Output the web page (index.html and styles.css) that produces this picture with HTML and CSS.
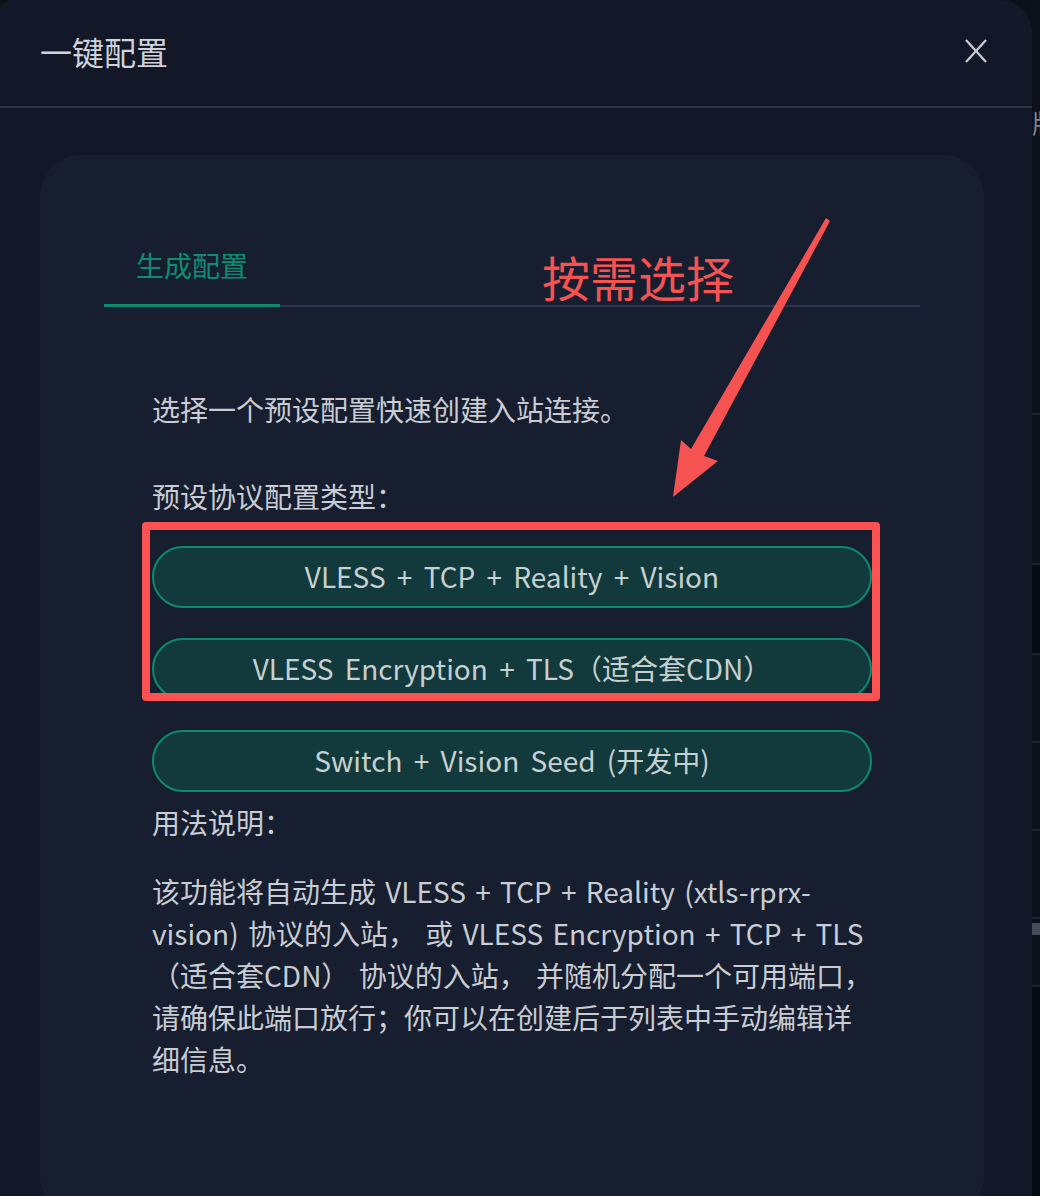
FILE: index.html
```html
<!DOCTYPE html>
<html lang="zh-CN">
<head>
<meta charset="utf-8">
<title>一键配置</title>
<link rel="stylesheet" href="styles.css">
</head>
<body>
<div class="page">
  <div class="modal">
    <div class="modal-head">
      <div class="modal-title">一键配置</div>
      <svg class="close" width="24" height="24" viewBox="0 0 24 24"><path d="M2 1 L22 23 M22 1 L2 23" stroke="#c9ccd2" stroke-width="2.2" fill="none"/></svg>
    </div>
    <div class="modal-body">
      <div class="card">
        <div class="tabs">
          <div class="tab active">生成配置</div>
        </div>
        <div class="content">
          <p class="intro">选择一个预设配置快速创建入站连接。</p>
          <p class="label">预设协议配置类型：</p>
          <div class="btns">
            <div class="btn">VLESS + TCP + Reality + Vision</div>
            <div class="btn">VLESS Encryption + TLS（适合套CDN）</div>
            <div class="btn">Switch + Vision Seed (开发中)</div>
          </div>
          <p class="label usage">用法说明：</p>
          <p class="desc">该功能将自动生成 VLESS + TCP + Reality (xtls-rprx-<br>vision) 协议的入站， 或 VLESS Encryption + TCP + TLS<br>（适合套CDN） 协议的入站， 并随机分配一个可用端口，<br>请确保此端口放行；你可以在创建后于列表中手动编辑详<br>细信息。</p>
        </div>
      </div>
    </div>
  </div>
  <div class="strip">
    <div class="s-row s1"><span class="s-char">版</span></div>
    <div class="s-row s2"></div>
    <div class="s-row s3"></div>
    <div class="s-row s4"></div>
    <div class="s-row s5"></div>
    <div class="s-row s6"></div>
    <div class="s-row s7"></div>
    <div class="s-row s8"></div>
    <div class="s-row s9"></div>
    <div class="s-row s10"></div>
    <div class="s-row s11"></div>
  </div>

  <div class="note">按需选择</div>
  <div class="highlight"></div>
  <svg class="arrow" width="1040" height="1196" viewBox="0 0 1040 1196">
    <polygon points="826,218 830,221 704,456 718,461 673,497 681,440 691,449" fill="#f75252"/>
  </svg>
</div>
</body>
</html>
```

FILE: styles.css
```css
* { box-sizing: border-box; }
html, body { margin: 0; padding: 0; }
body {
  width: 1040px;
  height: 1196px;
  overflow: hidden;
  background: #0c1019;
  font-family: "Noto Sans CJK SC", "Noto Sans", sans-serif;
}
.page {
  position: relative;
  display: flex;
  width: 1040px;
  height: 1196px;
}
.modal {
  width: 1032px;
  height: 1196px;
  flex: none;
  background: #121827;
  border-radius: 12px 32px 0 0;
  display: flex;
  flex-direction: column;
  overflow: hidden;
}
.modal-head {
  height: 108px;
  flex: none;
  border-bottom: 2px solid #28344c;
  display: flex;
  align-items: center;
  justify-content: space-between;
  padding: 0 44px 4px 40px;
}
.modal-title {
  font-size: 32px;
  color: #d0d3d9;
  line-height: 40px;
}
.close { display: block; }
.modal-body {
  padding: 47px 48px 0 40px;
}
.card {
  width: 944px;
  height: 1060px;
  background: #161e30;
  border-radius: 40px;
  padding: 81px 64px 0 64px;
}
.tabs {
  display: flex;
  box-shadow: inset 0 -2px 0 #2a3650;
}
.tab {
  font-size: 28px;
  line-height: 40px;
  padding: 9px 32px 19px;
  color: #0f8c70;
  border-bottom: 3px solid #0b8a6e;
}
.content {
  padding: 0 48px;
  color: #c9ccd2;
  font-size: 28px;
}
.content p { margin: 0; line-height: 42px; }
.intro { margin-top: 81px !important; }
.label { margin-top: 45px !important; }
.btns {
  display: flex;
  flex-direction: column;
  gap: 30px;
  margin-top: 29px;
}
.btn {
  height: 62px;
  border: 2px solid #0d8a6d;
  border-radius: 31px;
  background: #12393b;
  color: #c7d0d0;
  font-size: 28px;
  word-spacing: 5px;
  padding-bottom: 2px;
  display: flex;
  align-items: center;
  justify-content: center;
}
.usage { margin-top: 9px !important; }
.desc {
  margin-top: 27px !important;
  white-space: nowrap;
  word-spacing: 3px;
}
.strip {
  flex: 1;
  display: flex;
  flex-direction: column;
  background: #0d1119;
}
.s-row { border-bottom: 2px solid #1d2230; }
.s1 { height: 258px; position: relative; border-bottom: none; }
.s-char {
  position: absolute;
  left: 0;
  top: 108px;
  font-size: 26px;
  line-height: 30px;
  color: #7d8390;
}
.s2 { height: 157px; background: #0d1119; }
.s3 { height: 150px; }
.s4 { height: 90px; background: #060a12; }
.s5 { height: 88px; }
.s6 { height: 88px; }
.s7 { height: 88px; }
.s8 { height: 4px; border: none; }
.s9 { height: 12px; background: #454c5a; border: none; }
.s10 { height: 52px; }
.s11 { flex: 1; background: #060a12; border: none; }

.note {
  position: absolute;
  left: 542px;
  top: 248px;
  font-size: 48px;
  line-height: 56px;
  color: #f55252;
}
.highlight {
  position: absolute;
  left: 142px;
  top: 522px;
  width: 738px;
  height: 179px;
  border: 8px solid #fd5252;
  border-radius: 4px;
}
.arrow {
  position: absolute;
  left: 0;
  top: 0;
  pointer-events: none;
}
```
